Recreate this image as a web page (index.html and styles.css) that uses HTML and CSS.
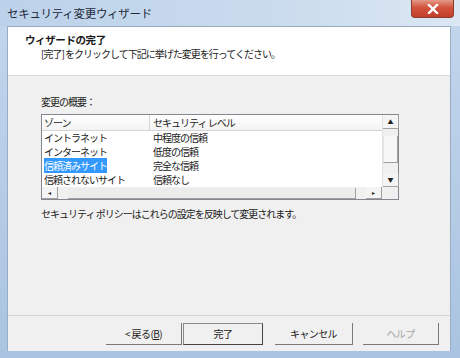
FILE: index.html
```html
<!DOCTYPE html>
<html lang="ja">
<head>
    <meta charset="UTF-8">
    <title>セキュリティ変更ウィザード</title>
    <link rel="stylesheet" href="styles.css">
</head>
<body>
    <div class="window">
        <!-- Title bar -->
        <div class="titlebar">
            <span class="title">セキュリティ変更ウィザード</span>
            <span class="close-btn">
                <svg width="14" height="10" viewBox="0 0 14 10">
                    <path d="M3 1 L11 9 M11 1 L3 9" stroke="#fff" stroke-width="2.4" stroke-linecap="square"/>
                </svg>
            </span>
        </div>

        <div class="client">
            <!-- Header -->
            <div class="header">
                <div class="header-title">ウィザードの完了</div>
                <div class="header-sub">[完了] をクリックして下記に挙げた変更を行ってください。</div>
            </div>

            <!-- Content -->
            <div class="content">
                <div class="label">変更の概要：</div>
                <div class="listview">
                    <div class="list-main">
                        <div class="list-head">
                            <span class="col-zone">ゾーン</span>
                            <span class="col-level">セキュリティ レベル</span>
                        </div>
                        <div class="list-row">
                            <span class="col-zone">イントラネット</span>
                            <span class="col-level">中程度の信頼</span>
                        </div>
                        <div class="list-row">
                            <span class="col-zone">インターネット</span>
                            <span class="col-level">低度の信頼</span>
                        </div>
                        <div class="list-row">
                            <span class="col-zone"><span class="selected">信頼済みサイト</span></span>
                            <span class="col-level">完全な信頼</span>
                        </div>
                        <div class="list-row">
                            <span class="col-zone">信頼されないサイト</span>
                            <span class="col-level">信頼なし</span>
                        </div>
                    </div>
                    <div class="vscroll">
                        <span class="sb-btn">▲</span>
                        <span class="sb-thumb"></span>
                        <span class="sb-track"></span>
                        <span class="sb-btn">▼</span>
                    </div>
                    <div class="hscroll">
                        <span class="sb-btn">◂</span>
                        <span class="sb-htrack"></span>
                        <span class="sb-btn">▸</span>
                    </div>
                    <div class="sb-corner"></div>
                </div>
                <div class="note">セキュリティ ポリシーはこれらの設定を反映して変更されます。</div>
            </div>

            <!-- Buttons -->
            <div class="footer">
                <button class="btn">&lt; 戻る(<u>B</u>)</button>
                <button class="btn default">完了</button>
                <button class="btn cancel">キャンセル</button>
                <button class="btn disabled">ヘルプ</button>
            </div>
        </div>
        <div class="bottom-frame"></div>
    </div>
</body>
</html>
```

FILE: styles.css
```css
body {
    margin: 0;
    font-family: "Noto Sans CJK JP", "DejaVu Sans", sans-serif;
    font-size: 10px;
    letter-spacing: -1px;
    color: #1a1a1a;
}

.window {
    width: 460px;
    height: 358px;
    background: linear-gradient(180deg, #c3d6ec 0%, #b9cfe8 40%, #a9c3e0 100%);
    display: flex;
    flex-direction: column;
}

.titlebar {
    height: 26px;
    display: flex;
    justify-content: space-between;
    align-items: flex-start;
    padding-left: 7px;
    padding-right: 6px;
    background: linear-gradient(90deg, #bcd2ea 0%, #cadbed 60%, #dbe7f3 100%);
}

.title {
    font-size: 11.5px;
    letter-spacing: -0.3px;
    color: #1e2a3a;
    margin-top: 5px;
}

.close-btn {
    width: 41px;
    height: 17px;
    background: linear-gradient(180deg, #e49a8a 0%, #d2533c 45%, #c13f28 100%);
    border: 1px solid #8e3a2c;
    border-top: none;
    border-radius: 0 0 4px 4px;
    display: flex;
    align-items: center;
    justify-content: center;
}

.client {
    flex: 1;
    margin: 0 9px 0 7px;
    background: #f0f0f0;
    display: flex;
    flex-direction: column;
    border: 1px solid #98acc4;
    border-bottom: none;
}

.header {
    height: 48px;
    background: #ffffff;
    border-bottom: 1px solid #d8dde3;
    padding-left: 17px;
}

.header-title {
    font-weight: bold;
    font-size: 10.5px;
    letter-spacing: -0.4px;
    margin-top: 6px;
    line-height: 13px;
}

.header-sub {
    margin-left: 16px;
    margin-top: 1px;
    line-height: 13px;
}

.content {
    flex: 1;
    padding-left: 33px;
}

.label {
    margin-top: 19px;
    line-height: 13px;
}

.listview {
    margin-top: 6px;
    width: 356px;
    height: 84px;
    border: 1px solid #828790;
    background: #ffffff;
    display: grid;
    grid-template-columns: 1fr 16px;
    grid-template-rows: 1fr 12px;
}

.list-main {
    overflow: hidden;
}

.list-head {
    height: 16px;
    display: flex;
    align-items: center;
    background: linear-gradient(180deg, #ffffff 0%, #f3f3f3 100%);
    border-bottom: 1px solid #d5d5d5;
    box-sizing: border-box;
}

.list-row {
    height: 14px;
    line-height: 14px;
    display: flex;
    align-items: center;
}

.col-zone {
    width: 108px;
    padding-left: 2px;
    box-sizing: border-box;
}

.list-head .col-zone {
    border-right: 1px solid #d5d5d5;
    height: 15px;
    line-height: 15px;
}

.col-level {
    padding-left: 3px;
}

.selected {
    background: #3399ff;
    color: #ffffff;
}

.vscroll {
    display: flex;
    flex-direction: column;
    background: #f0f0f0;
    border-left: 1px solid #e2e2e2;
}

.sb-btn {
    width: 16px;
    height: 14px;
    font-size: 6px;
    letter-spacing: 0;
    line-height: 14px;
    text-align: center;
    color: #222;
    background: #f4f4f4;
    border-right: 1px solid #a0a0a0;
    border-bottom: 1px solid #a0a0a0;
    box-sizing: border-box;
}

.sb-thumb {
    height: 26px;
    margin-top: 7px;
    background: #f7f7f7;
    border-right: 1px solid #a0a0a0;
    border-bottom: 1px solid #a0a0a0;
    border-left: 1px solid #e6e6e6;
}

.sb-track {
    flex: 1;
}

.hscroll {
    display: flex;
    background: #f0f0f0;
}

.hscroll .sb-btn {
    height: 12px;
    line-height: 12px;
}

.sb-htrack {
    flex: 1;
    margin: 1px 10px 0 10px;
    background: #ececec;
    border-right: 1px solid #a0a0a0;
    border-bottom: 1px solid #a0a0a0;
}

.sb-corner {
    background: #f0f0f0;
}

.note {
    margin-top: 7px;
    line-height: 13px;
}

.footer {
    height: 35px;
    border-top: 1px solid #d5d5d5;
    display: flex;
    align-items: center;
    padding-left: 98px;
}

.btn {
    width: 76px;
    height: 22px;
    font-family: inherit;
    font-size: 10px;
    letter-spacing: -0.6px;
    color: #1a1a1a;
    background: #f0f0f0;
    border: none;
    border-right: 1px solid #7a7a7a;
    border-bottom: 1px solid #7a7a7a;
    padding: 0;
}

.btn.default {
    width: 80px;
    margin-left: 1px;
    border: 1px solid #444;
    border-top-color: #8a8a8a;
    border-left-color: #8a8a8a;
}

.btn.cancel {
    width: 78px;
    margin-left: 12px;
}

.btn.disabled {
    color: #a6a6a6;
    margin-left: 10px;
}

.bottom-frame {
    height: 7px;
}
```
